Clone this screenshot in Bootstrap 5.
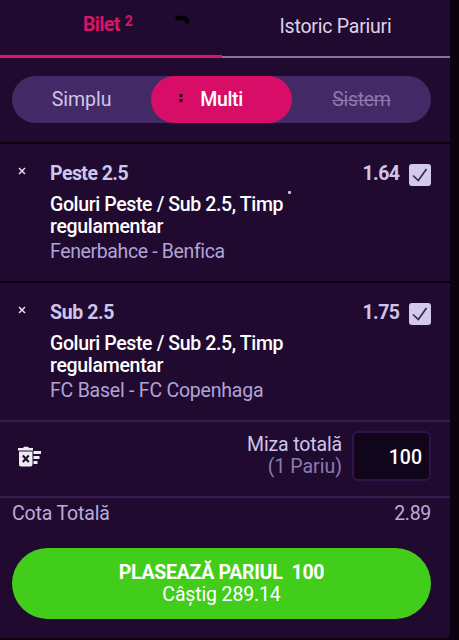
<!DOCTYPE html>
<html lang="ro">
<head>
<meta charset="utf-8">
<meta name="viewport" content="width=device-width, initial-scale=1">
<title>Bilet</title>
<link rel="stylesheet" href="https://cdn.jsdelivr.net/npm/bootstrap@5.3.0/dist/css/bootstrap.min.css">
<style>
body{background:#0d020f;font-family:Roboto,"Liberation Sans",sans-serif;font-size:19.5px;line-height:22px;color:#cfc5ea;overflow:hidden}
.slip{width:450px;height:638px;background:#200a30;border-bottom-right-radius:5px}
.tabs{height:58px;flex:none}
.tab-a{width:222px;border-bottom:3px solid #e60f69;color:#d81564;padding:14px 0 0 83px}
.tab-b{border-bottom:2px solid #83719f;color:#ddd3ef;padding:16px 0 0 57.5px}
.tab-a sup{font-size:14px;font-weight:700;top:-5px;margin-left:5px;line-height:0}
.scribble{left:175px;top:14px}
.modes{margin:18px 19px 19px 12px;height:47px;background:#432a66;flex:none}
.modes>div{width:139.5px;height:47px;padding-top:1px}
.modes>.on{width:141px;background:#d80d67;color:#fff}
.dots{left:28px;top:17px}
.off{color:#8c78ae;text-decoration:line-through;text-decoration-thickness:1px}
.pick{height:139px;border-top:2px solid #09010d;padding:19px 19px 0 0;flex:none}
.pick .x-col{width:50px;padding:4px 0 0 18px}
.pick svg{display:block}
.market{color:#fff;margin-top:9px;width:270px}
.teams{color:#b1a3d6;margin-top:3px}
.odd{margin-right:9.5px}
.tick{width:22px;height:22px;border-radius:3px;background:#d3c9ea;margin-top:1px}
.pick .headline{height:22px}
.stake{height:76px;border-top:2px solid #341b50;padding:0 19px 6px 18px;flex:none}
.amount{width:79px;height:50px;background:#10051a;border:2px solid #32124b;border-radius:6px;color:#fff;padding:3px 7px 0 0;margin-left:10px}
.paren{color:#8c7cae}
.total{border-top:2px solid #341b50;padding:5px 19px 0 12px;height:52px;flex:none;color:#b9add9}
.place{margin:0 19px 0 12px;height:71px;background:#42cd1b;border:0;color:#fff;padding:1px 0 0;font-size:19.5px;line-height:22px}
.place:hover{background:#42cd1b;color:#fff}
.speck{left:288px;top:191px;width:3px;height:3px;background:#c9c4cf;border-radius:1px}
.t{display:inline-block;white-space:pre}
.ls1{letter-spacing:-.15px}
.ls2{letter-spacing:-.22px}
.ls3{letter-spacing:-.3px}
.ls4{letter-spacing:-.37px}
.ls5{letter-spacing:-.55px}
.ls7{letter-spacing:-.65px}
</style>
<script src="https://cdn.jsdelivr.net/npm/bootstrap@5.3.0/dist/js/bootstrap.bundle.min.js"></script>
</head>
<body>
<main class="slip d-flex flex-column position-relative">
  <div class="tabs d-flex align-items-end">
    <div class="tab-a h-100 position-relative fw-bold"><span class="t ls7">Bilet</span><sup>2</sup>
      <svg class="scribble position-absolute" width="16" height="11" viewBox="0 0 16 11"><path d="M2.500 4h5q2.500 0 4 2l.7 1" fill="none" stroke="#000" stroke-width="4.500" stroke-linecap="round"/></svg>
    </div>
    <div class="tab-b h-100 flex-grow-1"><span class="t ls2">Istoric Pariuri</span></div>
  </div>
  <div class="modes d-flex rounded-pill">
    <div class="d-flex align-items-center justify-content-center"><span class="t">Simplu</span></div>
    <div class="on d-flex align-items-center justify-content-center rounded-pill position-relative fw-medium">
      <svg class="dots position-absolute" width="4" height="10" viewBox="0 0 4 10"><path d="M.5 1h3v3h-3zM.5 6h3v3h-3z" fill="#1c0512"/></svg><span class="t ls4">Multi</span></div>
    <div class="d-flex align-items-center justify-content-center"><span class="t off ls3">Sistem</span></div>
  </div>

  <section class="pick d-flex">
    <div class="x-col flex-shrink-0"><svg width="8" height="8" viewBox="0 0 8 8"><path d="M1 1l6 6M7 1l-6 6" stroke="#e5dfe9" stroke-width="1.500"/></svg></div>
    <div class="flex-grow-1">
      <div class="headline d-flex fw-bold"><span class="t me-auto ls5">Peste 2.5</span><span class="t odd ls5">1.64</span>
        <span class="tick"><svg width="22" height="22" viewBox="0 0 22 22"><path d="M4 11.500L9.300 16.500L17.500 5" fill="none" stroke="#3b2650" stroke-width="1.700"/></svg></span></div>
      <div class="market fw-medium"><span class="t ls4">Goluri Peste / Sub 2.5, Timp</span><br><span class="t ls3">regulamentar</span></div>
      <div class="teams"><span class="t ls4">Fenerbahce - Benfica</span></div>
    </div>
  </section>
  <section class="pick d-flex">
    <div class="x-col flex-shrink-0"><svg width="8" height="8" viewBox="0 0 8 8"><path d="M1 1l6 6M7 1l-6 6" stroke="#e5dfe9" stroke-width="1.500"/></svg></div>
    <div class="flex-grow-1">
      <div class="headline d-flex fw-bold"><span class="t me-auto ls4">Sub 2.5</span><span class="t odd ls5">1.75</span>
        <span class="tick"><svg width="22" height="22" viewBox="0 0 22 22"><path d="M4 11.500L9.300 16.500L17.500 5" fill="none" stroke="#3b2650" stroke-width="1.700"/></svg></span></div>
      <div class="market fw-medium"><span class="t ls4">Goluri Peste / Sub 2.5, Timp</span><br><span class="t ls3">regulamentar</span></div>
      <div class="teams"><span class="t ls2">FC Basel - FC Copenhaga</span></div>
    </div>
  </section>

  <div class="stake d-flex align-items-center">
    <svg class="me-auto" width="23" height="21" viewBox="0 0 23 21"><g fill="#eeeaf3"><path d="M0 2h5l1-1.300h4l1 1.300h4v2.600H0zM1 5.500h13.500v13q0 2-2 2h-9.500q-2 0-2-2zM15.500 5h7.500v3h-7.500zM15.500 10h6v3h-6zM15.500 15h4v3h-4z"/></g><path d="M4.800 9.500l6 6.500M10.800 9.500l-6 6.500" stroke="#200a30" stroke-width="2"/></svg>
    <div class="text-end"><div><span class="t ls1">Miza totală</span></div><div class="paren"><span class="t">(1 Pariu)</span></div></div>
    <div class="amount d-flex align-items-center justify-content-end fw-medium"><span class="t">100</span></div>
  </div>
  <div class="total d-flex justify-content-between"><span class="t ls1">Cota Totală</span><span class="t ls3">2.89</span></div>
  <button type="button" class="place btn rounded-pill d-flex flex-column align-items-center justify-content-center"><span class="t fw-bold ls3">PLASEAZĂ PARIUL  100</span><span class="t ls1">Câștig 289.14</span></button>
  <span class="speck position-absolute"></span>
</main>
</body>
</html>
